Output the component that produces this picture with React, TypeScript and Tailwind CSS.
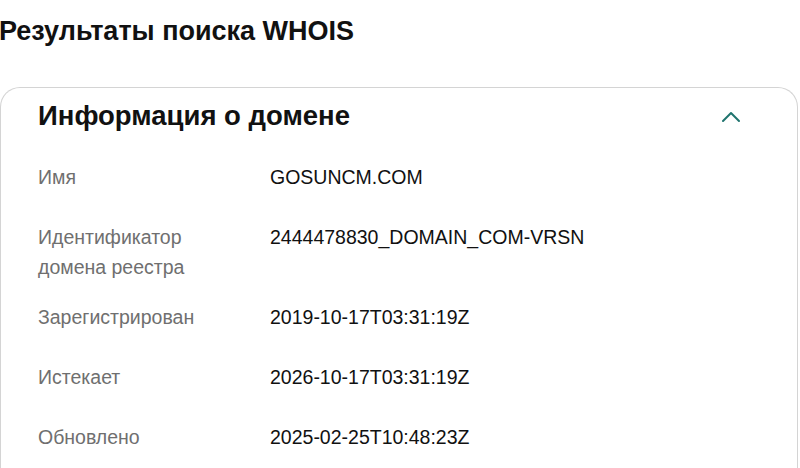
import React from "react";

const rows: { label: string[]; value: string }[] = [
  { label: ["Имя"], value: "GOSUNCM.COM" },
  { label: ["Идентификатор", "домена реестра"], value: "2444478830_DOMAIN_COM-VRSN" },
  { label: ["Зарегистрирован"], value: "2019-10-17T03:31:19Z" },
  { label: ["Истекает"], value: "2026-10-17T03:31:19Z" },
  { label: ["Обновлено"], value: "2025-02-25T10:48:23Z" },
];

export default function App() {
  return (
    <div className="w-[800px] h-[468px] overflow-hidden bg-white">
      <h1 className="pt-[14px] -ml-[1px] text-[27px] leading-[34px] font-bold text-[#111111] [font-family:'Liberation_Sans',Arial,sans-serif]">
        Результаты поиска WHOIS
      </h1>
      <div className="mt-[39px] mr-[2px] border border-[#d4d4d4] rounded-t-[20px] border-b-0 h-[400px]">
        <div className="flex items-center justify-between pl-[37px] pr-[56px] pt-[12px]">
          <h2 className="text-[27.5px] leading-[32px] font-bold text-[#111111] [font-family:'Liberation_Sans',Arial,sans-serif]">
            Информация о домене
          </h2>
          <svg width="20" height="12" viewBox="0 0 20 12" fill="none" className="mt-[2px]">
            <path d="M2 10 L10 2 L18 10" stroke="#1f746e" strokeWidth="2" strokeLinecap="round" strokeLinejoin="round" />
          </svg>
        </div>
        <div className="flex flex-col gap-[20px] pl-[37px] pt-[30px]">
          {rows.map((r) => (
            <div key={r.value} className="flex items-start min-h-[40px]">
              <div className="w-[232px] text-[19.5px] leading-[30px] text-[#6f6f6f] [font-family:'Liberation_Sans',Arial,sans-serif]">
                {r.label.map((l) => (
                  <div key={l}>{l}</div>
                ))}
              </div>
              <div className="text-[19.5px] leading-[30px] text-[#111111] [font-family:'Liberation_Sans',Arial,sans-serif]">
                {r.value}
              </div>
            </div>
          ))}
        </div>
      </div>
    </div>
  );
}
